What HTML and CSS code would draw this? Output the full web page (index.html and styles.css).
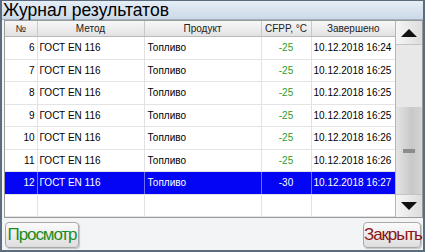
FILE: index.html
```html
<!DOCTYPE html>
<html lang="ru">
    <head>
        <meta charset="utf-8" />
        <title>Журнал результатов</title>
        <link rel="stylesheet" href="styles.css">
    </head>

    <body>
        <div class="window">
            <div class="titlebar">Журнал результатов</div>

            <div class="frame">
                <table class="log">
                    <colgroup>
                        <col class="c-num" />
                        <col class="c-method" />
                        <col class="c-product" />
                        <col class="c-cfpp" />
                        <col class="c-date" />
                    </colgroup>
                    <tr class="heading">
                        <td>№</td>
                        <td>Метод</td>
                        <td>Продукт</td>
                        <td>CFPP, °C</td>
                        <td>Завершено</td>
                    </tr>
                    <tr class="item">
                        <td class="num">6</td>
                        <td>ГОСТ EN 116</td>
                        <td class="product">Топливо</td>
                        <td class="cfpp">-25</td>
                        <td>10.12.2018 16:24</td>
                    </tr>
                    <tr class="item">
                        <td class="num">7</td>
                        <td>ГОСТ EN 116</td>
                        <td class="product">Топливо</td>
                        <td class="cfpp">-25</td>
                        <td>10.12.2018 16:25</td>
                    </tr>
                    <tr class="item">
                        <td class="num">8</td>
                        <td>ГОСТ EN 116</td>
                        <td class="product">Топливо</td>
                        <td class="cfpp">-25</td>
                        <td>10.12.2018 16:25</td>
                    </tr>
                    <tr class="item">
                        <td class="num">9</td>
                        <td>ГОСТ EN 116</td>
                        <td class="product">Топливо</td>
                        <td class="cfpp">-25</td>
                        <td>10.12.2018 16:25</td>
                    </tr>
                    <tr class="item">
                        <td class="num">10</td>
                        <td>ГОСТ EN 116</td>
                        <td class="product">Топливо</td>
                        <td class="cfpp">-25</td>
                        <td>10.12.2018 16:26</td>
                    </tr>
                    <tr class="item">
                        <td class="num">11</td>
                        <td>ГОСТ EN 116</td>
                        <td class="product">Топливо</td>
                        <td class="cfpp">-25</td>
                        <td>10.12.2018 16:26</td>
                    </tr>
                    <tr class="item selected">
                        <td class="num">12</td>
                        <td>ГОСТ EN 116</td>
                        <td class="product">Топливо</td>
                        <td class="cfpp">-30</td>
                        <td>10.12.2018 16:27</td>
                    </tr>
                    <tr class="item">
                        <td></td>
                        <td></td>
                        <td></td>
                        <td></td>
                        <td></td>
                    </tr>
                </table>

                <div class="scrollbar">
                    <div class="arrow up"></div>
                    <div class="track"></div>
                    <div class="thumb"><span class="grip"></span></div>
                    <div class="arrow down"></div>
                </div>
            </div>

            <div class="buttons">
                <button class="btn view">Просмотр</button>
                <button class="btn close">Закрыть</button>
            </div>
        </div>
    </body>
</html>
```

FILE: styles.css
```css
body {
    margin: 0;
    font-family: "Liberation Sans", Arial, sans-serif;
    color: #000;
}

.window {
    width: 425px;
    height: 252px;
    box-sizing: border-box;
    border: 2px solid #5b6c7e;
    border-top-width: 1px;
    background: #f2f4f6;
    display: flex;
    flex-direction: column;
}

.titlebar {
    height: 18px;
    line-height: 18px;
    padding-left: 1px;
    font-size: 17.5px;
    background: linear-gradient(#e6edf5, #cbd9e7);
    border-bottom: 1px solid #9fb0c2;
}

.frame {
    display: flex;
    height: 198px;
    box-sizing: border-box;
    margin: 0 0 0 2px;
    border: 1px solid #9a9a9a;
    background: #fff;
}

.log {
    width: 390px;
    table-layout: fixed;
    border-collapse: collapse;
    font-size: 10px;
    align-self: flex-start;
}

.c-num { width: 32px; }
.c-method { width: 107px; }
.c-product { width: 117px; }
.c-cfpp { width: 50px; }
.c-date { width: 84px; }

.log td {
    padding: 0 2px;
    border-left: 1px solid #e2e2e2;
    white-space: nowrap;
    overflow: hidden;
}

.log td:first-child {
    border-left: none;
}

.log tr.heading td {
    height: 15px;
    text-align: center;
    color: #222;
    background: linear-gradient(#f7f7f7, #e2e2e2);
    border-bottom: 1px solid #b9b9b9;
    border-left-color: #c8c8c8;
}

.log tr.item td {
    height: 21.5px;
    border-bottom: 1px solid #e4e4e4;
}

.log td.num {
    text-align: right;
}

.log td.product {
    padding-left: 3px;
}

.log td.cfpp {
    text-align: center;
    color: #2a9d2a;
}

.log tr.selected td {
    background: #0505f5;
    color: #fff;
    border-left-color: #6c6cff;
}

.log tr.selected td.cfpp {
    color: #fff;
}

.scrollbar {
    width: 26px;
    display: flex;
    flex-direction: column;
    border-left: 1px solid #b5b5b5;
    background: #e9e9e9;
}

.arrow {
    height: 24px;
    box-sizing: border-box;
    background: linear-gradient(90deg, #f6f6f6, #dcdcdc);
    border-bottom: 1px solid #c4c4c4;
    display: flex;
    align-items: center;
    justify-content: center;
}

.arrow.down {
    height: 23px;
    border-bottom: none;
    border-top: 1px solid #c4c4c4;
}

.arrow::before {
    content: "";
    width: 0;
    height: 0;
    border-left: 8px solid transparent;
    border-right: 8px solid transparent;
}

.arrow.up::before {
    border-bottom: 8px solid #111;
}

.arrow.down::before {
    border-top: 8px solid #111;
}

.track {
    height: 62px;
    background: #e8e8e8;
}

.thumb {
    flex: 1;
    background: linear-gradient(90deg, #e4e4e4, #c8c8c8 60%, #d4d4d4);
    display: flex;
    align-items: center;
    justify-content: center;
}

.grip {
    width: 12px;
    height: 4px;
    background: #8c8c8c;
}

.buttons {
    flex: 1;
    display: flex;
    justify-content: space-between;
    align-items: center;
    padding: 2px 2px 0 3px;
}

.btn {
    height: 26px;
    padding: 0;
    font-family: "Liberation Sans", Arial, sans-serif;
    font-size: 17px;
    letter-spacing: -1.1px;
    white-space: nowrap;
    text-align: center;
    border: 1px solid #a9a9a9;
    border-radius: 4px;
    background: linear-gradient(#fbfbfb, #dedede);
    box-shadow: 1px 1px 1px rgba(0, 0, 0, 0.2);
}

.btn.view {
    width: 74px;
    color: #1e8c1e;
}

.btn.close {
    width: 58px;
    color: #8c1414;
}
```
